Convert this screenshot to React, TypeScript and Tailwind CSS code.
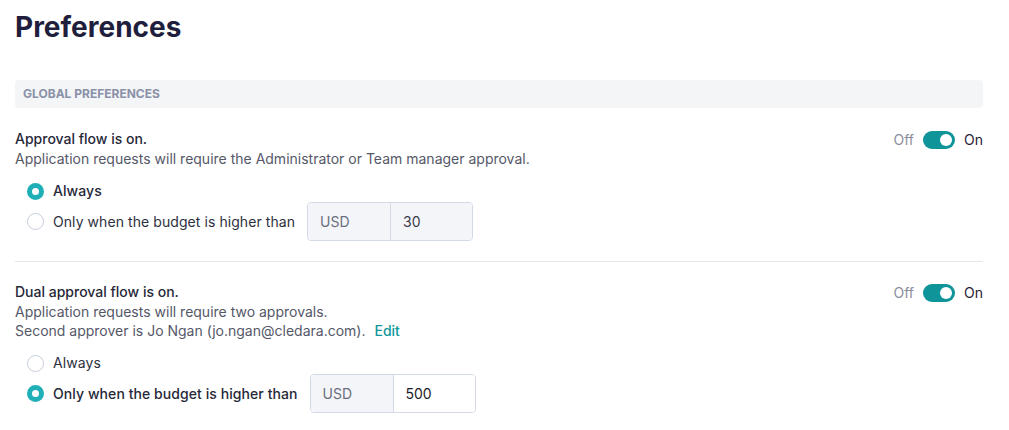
import { useState } from 'react';

type Mode = 'always' | 'budget';

function Toggle({ on, onChange }: { on: boolean; onChange: () => void }) {
  return (
    <div className="flex items-center gap-[9px] text-sm">
      <span className="text-[#8a8d9c]">Off</span>
      <button
        onClick={onChange}
        className={`flex h-[18px] w-[32px] items-center rounded-full px-[3px] ${on ? 'justify-end bg-[#0e9499]' : 'justify-start bg-[#c8ccd6]'}`}
      >
        <span className="block h-[12px] w-[12px] rounded-full bg-white" />
      </button>
      <span className="text-[#1f2033]">On</span>
    </div>
  );
}

function Radio({ checked, label, onClick }: { checked: boolean; label: string; onClick: () => void }) {
  return (
    <label className="flex cursor-pointer items-center gap-[9px]" onClick={onClick}>
      <span
        className={`block h-[17px] w-[17px] rounded-full bg-white ${checked ? 'border-[5px] border-[#1eb0b6]' : 'border-[1.5px] border-[#c6cddd]'}`}
      />
      <span className={checked ? 'font-medium tracking-[0.005em] text-[#262838]' : 'tracking-[0.005em] text-[#2e3040]'}>{label}</span>
    </label>
  );
}

function BudgetInput({ value, enabled }: { value: string; enabled: boolean }) {
  return (
    <div className="ml-[12px] flex h-[39px] w-[166px] overflow-hidden rounded border border-[#d3d9e6]">
      <div className="flex w-[83px] items-center border-r border-[#d3d9e6] bg-[#f4f5f8] px-3 text-[#6b6f80]">USD</div>
      <div className={`flex flex-1 items-center px-3 ${enabled ? 'bg-white text-[#1c1d2b]' : 'bg-[#f4f5f8] text-[#3a3c4a]'}`}>
        {value}
      </div>
    </div>
  );
}

function Section({
  title,
  lines,
  value,
  initial,
}: {
  title: string;
  lines: React.ReactNode[];
  value: string;
  initial: Mode;
}) {
  const [on, setOn] = useState(true);
  const [mode, setMode] = useState<Mode>(initial);
  return (
    <div className="flex justify-between">
      <div>
        <div className="font-medium leading-5 text-[#262838]">{title}</div>
        {lines.map((l, i) => (
          <div key={i} className="leading-[19px] text-[#555868]">
            {l}
          </div>
        ))}
        <div className="mt-[13px] flex flex-col gap-[1px] pl-[12px]">
          <div className="flex h-[20px] items-center">
            <Radio checked={mode === 'always'} label="Always" onClick={() => setMode('always')} />
          </div>
          <div className="flex h-[39px] items-center">
            <Radio checked={mode === 'budget'} label="Only when the budget is higher than" onClick={() => setMode('budget')} />
            <BudgetInput value={value} enabled={mode === 'budget'} />
          </div>
        </div>
      </div>
      <div className="pt-[1px]">
        <Toggle on={on} onChange={() => setOn(!on)} />
      </div>
    </div>
  );
}

export default function App() {
  return (
    <div className="min-h-screen bg-white pl-[15px] pr-[26px] text-sm" style={{ fontFamily: 'Inter, "Noto Sans", sans-serif' }}>
      <h1 className="pt-[9px] text-[28px] font-bold leading-[36px] text-[#1f1f3d]">Preferences</h1>

      <div className="mt-[35px] flex h-[28px] items-center rounded bg-[#f4f5f7] px-[8px] text-[12px] font-bold text-[#8a91a8]">
        GLOBAL PREFERENCES
      </div>

      <div className="pt-[21px]">
        <Section
          title="Approval flow is on."
          lines={['Application requests will require the Administrator or Team manager approval.']}
          value="30"
          initial="always"
        />
      </div>

      <div className="mt-[20px] border-t border-[#e3e6ed]" />

      <div className="pt-[20px]">
        <Section
          title="Dual approval flow is on."
          lines={[
            'Application requests will require two approvals.',
            <>
              Second approver is Jo Ngan (jo.ngan@cledara.com).
              <a className="ml-[9px] font-medium text-[#11979c]" href="#">
                Edit
              </a>
            </>,
          ]}
          value="500"
          initial="budget"
        />
      </div>
    </div>
  );
}
